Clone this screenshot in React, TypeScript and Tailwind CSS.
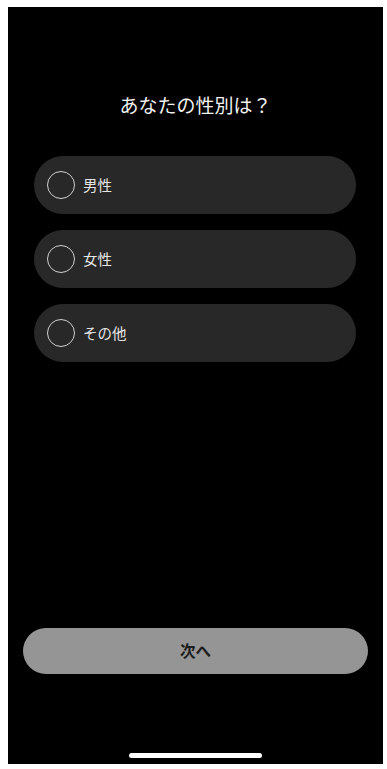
import { useState } from "react";

const options = ["男性", "女性", "その他"];

export default function App() {
  const [selected, setSelected] = useState<string | null>(null);

  return (
    <div
      className="h-[769px] w-[387px] bg-white pl-[8px] pt-[7px]"
      style={{ fontFamily: '"Noto Sans CJK JP", "Noto Sans", sans-serif' }}
    >
      <div className="flex h-[757px] w-[375px] flex-col bg-black pb-[6px] pt-[84px]">
        <h1 className="text-center text-[19px] leading-[28px] font-normal text-[#f2f2f2]">あなたの性別は？</h1>

        <div className="mt-[37px] flex flex-col gap-[16px] pl-[26px] pr-[27px]">
          {options.map((label) => (
            <button
              key={label}
              onClick={() => setSelected(label)}
              className="flex h-[58px] items-center gap-[8px] rounded-full bg-[#282828] pl-[13px] text-left"
            >
              <span className="flex h-[28px] w-[28px] items-center justify-center rounded-full border-[1.5px] border-[#d0d0d0]">
                {selected === label ? <span className="h-[14px] w-[14px] rounded-full bg-[#d0d0d0]" /> : null}
              </span>
              <span className="text-[14.5px] leading-none text-[#e6e6e6]">{label}</span>
            </button>
          ))}
        </div>

        <div className="mt-auto px-[15px]">
          <button className="h-[46px] w-full rounded-full bg-[#959595] text-[15.5px] font-bold text-[#1e1e1e]">次へ</button>
        </div>

        <div className="mt-[79px] flex justify-center">
          <div className="h-[5px] w-[133px] rounded-full bg-white" />
        </div>
      </div>
    </div>
  );
}
